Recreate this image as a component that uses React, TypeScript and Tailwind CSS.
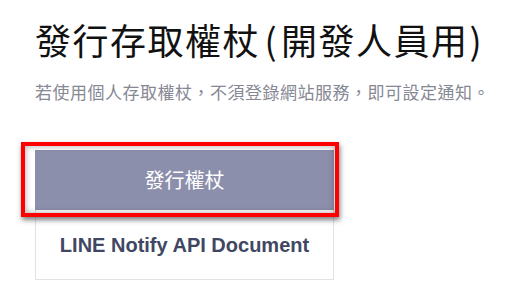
export default function App() {
  return (
    <div className="min-h-screen bg-white pl-[35px] pt-[16px] font-['Noto_Sans_CJK_TC',sans-serif]">
      {/* Heading */}
      <h1 className="text-[36px] leading-[46px] tracking-[1.5px] text-[#111] font-normal whitespace-nowrap">
        發行存取權杖<span className="inline-block w-[21px] text-center tracking-normal">(</span>開發人員用<span className="inline-block w-[14px] text-center tracking-normal">)</span>
      </h1>
      <p className="mt-[18px] text-[17px] leading-[24px] tracking-[0.5px] text-[#868894] whitespace-nowrap">
        若使用個人存取權杖，不須登錄網站服務，即可設定通知。
      </p>

      {/* Actions */}
      <div className="relative mt-[46px] w-[299px]">
        <button className="flex h-[60px] w-full items-center justify-center bg-[#8c8fab] text-[20px] text-white">
          發行權杖
        </button>
        <div className="flex h-[70px] w-full items-center justify-center border border-t-0 border-[#e2e2e2] font-['Liberation_Sans',sans-serif] text-[20px] font-bold text-[#404763]">
          LINE Notify API Document
        </div>

        {/* Annotation highlight */}
        <div className="pointer-events-none absolute -left-[14px] -top-[8px] h-[75px] w-[318px] border-4 border-[#ff0000] shadow-[1px_3px_5px_rgba(0,0,0,0.5),inset_0_0_6px_rgba(0,0,0,0.35)]" />
      </div>
    </div>
  );
}
